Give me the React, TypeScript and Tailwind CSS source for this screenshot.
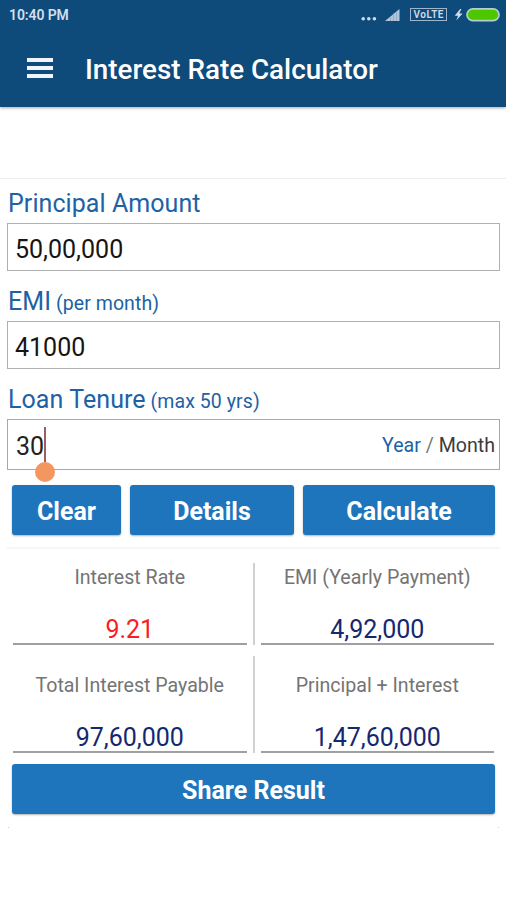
import type { ReactNode } from 'react';

const StatusBar = () => {
  return (
    <div className="flex h-[30px] items-center justify-between pl-[9px] pr-[6px] text-[#d3dfec]">
      <span className="text-[14px] leading-[30px] font-semibold tracking-[-0.1px]">10:40 PM</span>
      <svg width="142" height="30" viewBox="0 0 142 30" fill="none">
        <g fill="#cfdcea">
          <circle cx="5.2" cy="18.8" r="1.8" />
          <circle cx="10.8" cy="18.8" r="1.8" />
          <circle cx="16.4" cy="18.8" r="1.8" />
          <path d="M27 21L41.5 9V21Z" opacity="0.85" />
        </g>
        <path d="M32.5 16V21M35.5 13V21M38.5 11V21" stroke="#7c9dbb" strokeWidth="0.6" />
        <rect x="52.5" y="8.5" width="36" height="12" stroke="#9db6cd" />
        <text x="70.5" y="18.2" textAnchor="middle" textLength="30" fontSize="10" fontWeight="600" fill="#cfdcea">
          VoLTE
        </text>
        <path d="M102.2 9L96.7 15.8H100.1L98.2 20.5L104.6 13.5H101.2L103.4 9Z" fill="#d3dfec" />
        <rect x="109" y="8.8" width="32" height="11.8" rx="5.9" fill="#4cc700" stroke="#b4cfd0" strokeWidth="1.7" />
      </svg>
    </div>
  );
};

const Header = () => {
  return (
    <header className="h-[107px] bg-[#0f4b7a] shadow-[0_1px_3px_rgba(0,0,0,0.35)]">
      <StatusBar />
      <div className="flex h-[77px] items-center pl-[27px]">
        <div className="mb-[2px] flex w-[26px] flex-col gap-[4px]">
          <span className="h-[4px] bg-[#f1f4fb]" />
          <span className="h-[4px] bg-[#f1f4fb]" />
          <span className="h-[4px] bg-[#f1f4fb]" />
        </div>
        <h1 className="mt-[2px] ml-[32px] text-[27.8px] leading-[36px] font-medium text-white">
          Interest Rate Calculator
        </h1>
      </div>
    </header>
  );
};

const Label = ({ text, hint }: { text: string; hint?: string }) => {
  return (
    <label className="block h-[50px] pt-[16px] pl-px text-[25px] leading-[30px] tracking-[0.07px] whitespace-nowrap text-[#1d62a5]">
      {text}
      {hint && <span className="text-[19.5px]"> {hint}</span>}
    </label>
  );
};

const Button = ({ children, className }: { children: ReactNode; className: string }) => {
  return (
    <button
      className={`h-[50px] rounded-[3px] bg-[#1e75bb] pt-[3px] text-[25px] font-bold text-white shadow-[0_1px_2px_rgba(0,0,0,0.3)] ${className}`}
    >
      {children}
    </button>
  );
};

const Result = ({ title, value, className }: { title: string; value: string; className: string }) => {
  return (
    <div className="flex flex-1 flex-col items-center justify-end border-b-2 border-[#a0a0a0]">
      <p className="text-[19.6px] leading-[24px] text-[#747474]">{title}</p>
      <p className={`mt-[25px] -mb-[2px] text-[25px] leading-[30px] ${className}`}>{value}</p>
    </div>
  );
};

export default function App() {
  return (
    <div className="h-[900px] w-[506px] overflow-hidden bg-white font-['Roboto',sans-serif]">
      <Header />
      <div className="h-[72px] border-b border-[#ececec]" />

      <main className="pr-[6px] pl-[7px]">
        <div className="-mt-[6px]">
          <Label text="Principal Amount" />
          <div className="flex h-[48px] items-center border-[1.5px] border-[#b0b0b0] pt-[5px] pl-[7px] text-[25px] text-[#151515]">
            50,00,000
          </div>
        </div>
        <Label text="EMI" hint="(per month)" />
        <div className="flex h-[48px] items-center border-[1.5px] border-[#b0b0b0] pt-[5px] pl-[7px] text-[25px] text-[#151515]">
          41000
        </div>
        <Label text="Loan Tenure" hint="(max 50 yrs)" />
        <div className="flex h-[51px] items-center justify-between border-[1.5px] border-[#a8a8a8] pr-[4px] pl-[8px] text-[#222]">
          <div className="relative flex items-center text-[25px]">
            <span className="pt-[4px]">30</span>
            <span className="h-[35px] w-[2px] bg-[#a05d5d]" />
            <span className="absolute -right-[9px] -bottom-[17px] h-[20px] w-[20px] rounded-full bg-[#f3965f]" />
          </div>
          <p className="pt-[3px] text-[19.6px] text-[#3c3c3c]">
            <span className="text-[#1d62a5]">Year</span> <span className="text-[#777]">/</span> Month
          </p>
        </div>

        <div className="mt-[15px] flex gap-[9px] px-[5px]">
          <Button className="w-[109px]">Clear</Button>
          <Button className="w-[164px]">Details</Button>
          <Button className="flex-1">Calculate</Button>
        </div>

        <div className="mt-[12px] border-t-2 border-[#f6f6f6]" />

        <div className="mt-[14px] flex h-[82px] gap-[6px] pr-[6px] pl-[6px]">
          <Result title="Interest Rate" value="9.21" className="text-[#fb1c24]" />
          <div className="w-[2px] bg-[#d0d0d0]" />
          <Result title="EMI (Yearly Payment)" value="4,92,000" className="text-[#14286f]" />
        </div>
        <div className="mt-[11px] flex h-[97px] gap-[6px] pr-[6px] pl-[6px]">
          <Result title="Total Interest Payable" value="97,60,000" className="text-[#14286f]" />
          <div className="w-[2px] bg-[#d0d0d0]" />
          <Result title="Principal + Interest" value="1,47,60,000" className="text-[#14286f]" />
        </div>

        <div className="mt-[11px] flex px-[5px]">
          <Button className="flex-1">Share Result</Button>
        </div>
        <div className="mt-[13px] flex justify-between px-px">
          <span className="h-px w-px bg-[#bcd0e0]" />
          <span className="h-px w-px bg-[#bcd0e0]" />
        </div>
      </main>
    </div>
  );
}
